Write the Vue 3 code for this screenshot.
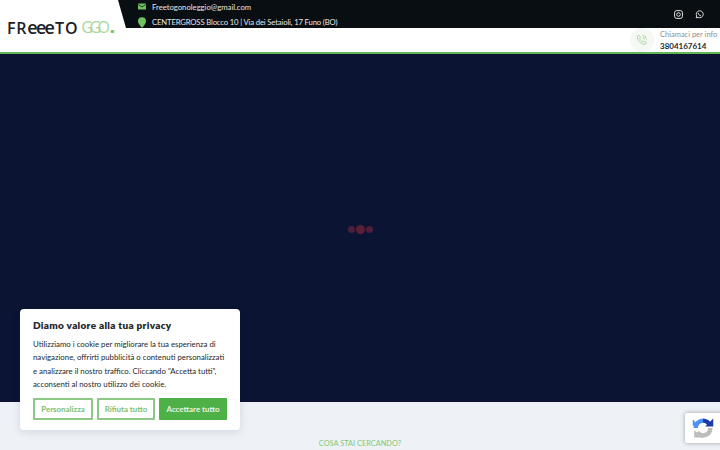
<script setup>
const contacts = [
  { id: 'mail', text: 'Freetogonoleggio@gmail.com' },
  { id: 'pin', text: 'CENTERGROSS Blocco 10 | Via dei Setaioli, 17 Funo (BO)' }
]
const buttons = [
  { label: 'Personalizza', cls: 'outline wide' },
  { label: 'Rifiuta tutto', cls: 'outline' },
  { label: 'Accettare tutto', cls: 'solid' }
]
</script>

<template>
  <div class="page">
    <header class="header">
      <div class="logo">
        <span class="logo-text">FR<span class="logo-e">eee</span>TO</span>
        <span class="logo-go">GGO<span class="logo-dot">.</span></span>
      </div>
      <div class="header-main">
        <div class="topbar">
          <div class="contacts">
            <div v-for="c in contacts" :key="c.id" class="contact" :class="c.id">
              <svg v-if="c.id === 'mail'" class="contact-icon" viewBox="0 0 16 16" width="8" height="7" preserveAspectRatio="none">
                <rect x="0" y="1" width="16" height="14" rx="2" fill="#6fc25f" />
                <path d="M1 4l7 5 7-5" fill="none" stroke="#0a0f16" stroke-width="1.6" />
              </svg>
              <svg v-else class="contact-icon" viewBox="0 0 12 16" width="8" height="11">
                <path d="M6 0a6 6 0 0 0-6 6c0 4 6 10 6 10s6-6 6-10a6 6 0 0 0-6-6z" fill="#6fc25f" />
              </svg>
              <span>{{ c.text }}</span>
            </div>
          </div>
          <div class="social">
            <svg viewBox="0 0 16 16" width="9" height="9" fill="none" stroke="#e8e8e8" stroke-width="1.7">
              <rect x="1" y="1" width="14" height="14" rx="4" />
              <circle cx="8" cy="8" r="3.2" />
            </svg>
            <svg viewBox="0 0 16 16" width="9" height="9" fill="none" stroke="#e8e8e8" stroke-width="1.6">
              <path d="M2 14l1-3.4A6.2 6.2 0 1 1 5.400 13z" />
              <path d="M5.800 5.200c0 2.600 2.200 5 5 5.200" />
            </svg>
          </div>
        </div>
        <div class="callbar">
          <div class="phone-round">
            <svg viewBox="0 0 24 24" width="12" height="12" fill="none" stroke="#7ecb70" stroke-width="1.300">
              <path d="M6 2.500l3 4-1.800 2.300c1.200 3 4 5.800 7 7l2.300-1.800 4 3-1.700 3.500C10 21 3 13 2.500 5z" />
              <path d="M13 3a8 8 0 0 1 8 8M13 7a4 4 0 0 1 4 4" />
            </svg>
          </div>
          <div class="call-text">
            <span class="call-label">Chiamaci per info</span>
            <span class="call-number">3804167614</span>
          </div>
        </div>
      </div>
    </header>

    <main class="hero">
      <div class="loader">
        <span class="dot"></span>
        <span class="dot big"></span>
        <span class="dot"></span>
      </div>
    </main>

    <section class="search">
      <p class="search-title">COSA STAI CERCANDO?</p>
    </section>

    <aside class="cookie">
      <h2>Diamo valore alla tua privacy</h2>
      <p>Utilizziamo i cookie per migliorare la tua esperienza di navigazione, offrirti pubblicità o contenuti personalizzati e analizzare il nostro traffico. Cliccando "Accetta tutti", acconsenti al nostro utilizzo dei cookie.</p>
      <div class="cookie-actions">
        <button v-for="b in buttons" :key="b.label" :class="b.cls">{{ b.label }}</button>
      </div>
    </aside>

    <div class="recaptcha">
      <svg viewBox="0 0 30 30" width="22" height="22" fill="none" stroke-width="6">
        <path d="M5 15A10 10 0 0 1 15 5" stroke="#4d90f5" />
        <path d="M15 5a10 10 0 0 1 9 6" stroke="#1c3aa9" />
        <path d="M25 15a10 10 0 0 1-18 6" stroke="#bcbcbc" />
        <path d="M18 13h11V2z" fill="#1c3aa9" stroke="none" />
        <path d="M1 3l8 9H1z" fill="#4d90f5" stroke="none" />
        <path d="M15 28l-12 0 0-10z" fill="#bcbcbc" stroke="none" />
      </svg>
    </div>
  </div>
</template>

<style>
html, body {
  margin: 0;
  overflow: hidden;
}
</style>

<style scoped>
.page {
  position: relative;
  width: 720px;
  height: 450px;
  overflow: hidden;
  font-family: Lato, "Open Sans", sans-serif;
  background: #eef1f6;
}

.header {
  display: flex;
  height: 52px;
  background: #fff;
  border-bottom: 2px solid #62b654;
}

.logo {
  width: 118px;
  padding: 18px 0 0 7px;
  box-sizing: border-box;
  display: flex;
  align-items: flex-start;
  font-family: "Open Sans", sans-serif;
  font-size: 16px;
  font-weight: 600;
  line-height: 18px;
  color: #1b2026;
  white-space: nowrap;
}

.logo-text {
  letter-spacing: 0.8px;
}

.logo-e {
  letter-spacing: -1.800px;
  margin-right: 2px;
  font-size: 18px;
  font-weight: 600;
}

.logo-go {
  margin-left: 3px;
  color: #a5d99c;
  letter-spacing: -3.500px;
  font-weight: 500;
}

.logo-dot {
  margin-left: 3.500px;
  color: #6fc25f;
  font-weight: 800;
}

.header-main {
  flex: 1;
  display: flex;
  flex-direction: column;
}

.topbar {
  height: 28px;
  display: flex;
  justify-content: space-between;
  align-items: center;
  padding: 0 16px 0 20px;
  background: #090e13;
  clip-path: polygon(0 0, 100% 0, 100% 100%, 8px 100%);
}

.contacts {
  display: flex;
  flex-direction: column;
  gap: 6px;
  padding-top: 2px;
}

.contact {
  display: flex;
  align-items: center;
  gap: 6px;
  font-size: 7.700px;
  line-height: 8px;
  color: #e2e5e8;
  white-space: nowrap;
}

.contact.pin {
  letter-spacing: -0.150px;
}

.contact-icon {
  flex: none;
}

.social {
  display: flex;
  gap: 12px;
}

.callbar {
  flex: 1;
  display: flex;
  justify-content: flex-end;
  align-items: center;
  gap: 6px;
  padding-right: 5px;
}

.phone-round {
  width: 24px;
  height: 24px;
  border-radius: 50%;
  background: #f6f8f6;
  display: flex;
  align-items: center;
  justify-content: center;
}

.call-text {
  display: flex;
  flex-direction: column;
  width: 55px;
  line-height: 10px;
}

.call-label {
  font-size: 7.500px;
  color: #8a8f94;
  white-space: nowrap;
}

.call-number {
  font-size: 8px;
  font-weight: 700;
  color: #25292e;
  margin-top: 1px;
}

.hero {
  height: 348px;
  background: #0b1432;
  display: flex;
  align-items: center;
  justify-content: center;
}

.loader {
  display: flex;
  align-items: center;
  gap: 1px;
  margin-top: 2px;
}

.dot {
  width: 7px;
  height: 7px;
  border-radius: 50%;
  background: #4e1f3a;
}

.dot.big {
  width: 9px;
  height: 9px;
  background: #5a2136;
}

.search {
  height: 48px;
}

.search-title {
  margin: 0;
  padding-top: 37px;
  text-align: center;
  font-size: 7.400px;
  line-height: 10px;
  color: #84c974;
}

.cookie {
  position: absolute;
  left: 20px;
  top: 309px;
  width: 220px;
  height: 121px;
  box-sizing: border-box;
  padding: 10px 13px 0;
  background: #fff;
  border-radius: 4px;
  box-shadow: 0 2px 8px rgba(20, 30, 60, 0.12);
  color: #24272b;
}

.cookie h2 {
  margin: 0 0 6px;
  font-size: 10px;
  line-height: 13px;
  font-weight: 800;
  letter-spacing: 0.3px;
}

.cookie p {
  margin: 0;
  font-size: 7.800px;
  line-height: 13.300px;
}

.cookie-actions {
  display: flex;
  gap: 4px;
  margin-top: 7px;
}

button {
  height: 22px;
  padding: 0;
  font: 700 7.900px Lato, "Open Sans", sans-serif;
  border-radius: 1px;
  border: 2px solid #8dc786;
  background: #fff;
  color: #7cc071;
  white-space: nowrap;
}

button.outline {
  width: 58px;
}

button.wide {
  width: 60px;
}

button.solid {
  width: 68px;
  background: #4eb148;
  border-color: #4eb148;
  color: #e8f5e4;
}

.recaptcha {
  position: absolute;
  left: 685px;
  top: 413px;
  width: 40px;
  height: 30px;
  padding: 4px 0 0 7px;
  box-sizing: border-box;
  background: #fff;
  border-radius: 2px;
  box-shadow: 0 0 4px rgba(0, 0, 0, 0.35);
}
</style>
